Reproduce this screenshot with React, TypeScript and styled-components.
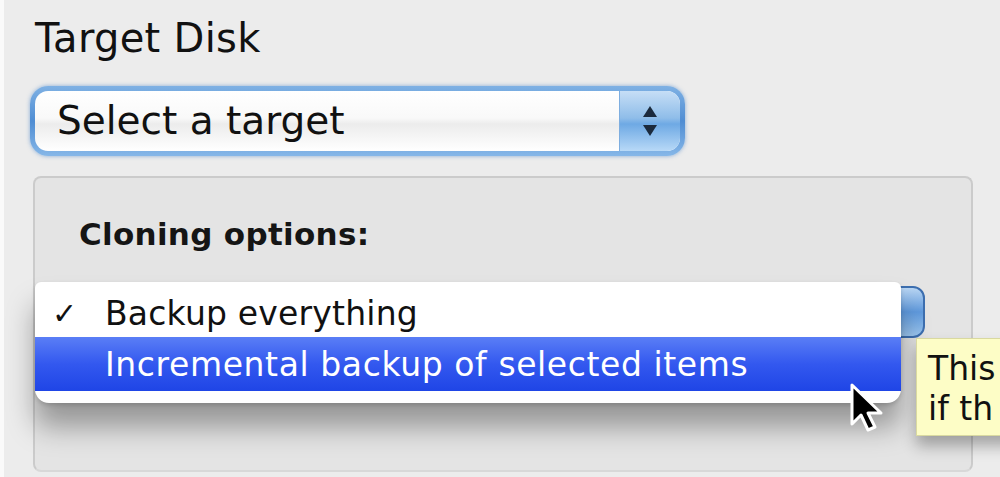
import React from 'react';
import styled, { createGlobalStyle } from 'styled-components';

const Global = createGlobalStyle`
  html, body {
    margin: 0;
    padding: 0;
    background: #ececec;
    overflow: hidden;
  }
  #root {
    width: 1000px;
    height: 477px;
  }
`

const Page = styled.div`
  position: relative;
  width: 1000px;
  height: 477px;
  box-sizing: border-box;
  padding: 12px 27px 0 30px;
  border-left: 4px solid #fafafa;
  display: flex;
  flex-direction: column;
  font-family: 'DejaVu Sans', 'Verdana', sans-serif;
  color: #111;
  overflow: hidden;
`

const Heading = styled.div`
  font-size: 40px;
  line-height: 52px;
  margin-left: 1px;
  letter-spacing: 0.3px;
`

const PopupFocus = styled.div`
  margin-top: 22px;
  width: 655px;
  height: 70px;
  box-sizing: border-box;
  padding: 5px;
  border-radius: 18px;
  background: linear-gradient(#7fb1e4, #4f8dd3 50%, #86b7e8);
  box-shadow: 0 0 4px rgba(70, 130, 200, 0.6);
  margin-left: -4px;
`

const PopupInner = styled.div`
  height: 100%;
  display: flex;
  border-radius: 13px;
  overflow: hidden;
  background: linear-gradient(#ffffff, #f9f9f9 45%, #ececec 55%, #ffffff);
`

const PopupLabel = styled.div`
  flex: 1;
  font-size: 39px;
  line-height: 60px;
  padding-left: 22px;
`

const ArrowCap = styled.div<{ $w: number }>`
  width: ${p => p.$w}px;
  display: flex;
  align-items: center;
  justify-content: center;
  background: linear-gradient(#c6def6, #8fbde9 45%, #6ea9e4 55%, #b8d9f7);
  border-left: 1px solid #7eaee0;
`

const GroupBox = styled.div`
  position: relative;
  margin-top: 20px;
  margin-left: -1px;
  height: 296px;
  box-sizing: border-box;
  border: 2px solid #cbcbcb;
  border-bottom-color: #d8d8d8;
  border-radius: 8px;
  background: #e4e4e4;
  padding: 36px 0 0 44px;
`

const GroupTitle = styled.div`
  font-size: 31px;
  font-weight: bold;
  line-height: 40px;
  letter-spacing: 0.3px;
  color: #151515;
`

const HiddenPopup = styled.div`
  margin-top: 32px;
  width: 864px;
  height: 52px;
  margin-left: -18px;
  border-radius: 12px;
  background: linear-gradient(#b9d6f3, #5f9ade 50%, #9cc6ef);
  border: 2px solid #3d6fb0;
  box-sizing: border-box;
`

const RadioDot = styled.div`
  margin-top: 12px;
  width: 24px;
  height: 10px;
  border-radius: 0 0 12px 12px;
  background: #222;
`

const Menu = styled.div`
  position: absolute;
  left: 0;
  top: 104px;
  width: 866px;
  padding: 8px 0 12px;
  background: #fff;
  border-radius: 6px 6px 14px 14px;
  box-shadow: 0 24px 28px rgba(0, 0, 0, 0.34), 0 2px 4px rgba(0, 0, 0, 0.15);
  z-index: 2;
`

const MenuItem = styled.div<{ $active?: boolean }>`
  display: flex;
  align-items: center;
  height: ${p => (p.$active ? 54 : 47)}px;
  font-size: 33px;
  letter-spacing: ${p => (p.$active ? 0.6 : 0.2)}px;
  color: ${p => (p.$active ? '#fff' : '#111')};
  background: ${p => (p.$active ? 'linear-gradient(#5a7ef6, #3358ef 50%, #1f45e6)' : 'transparent')};
`

const Check = styled.span`
  width: 70px;
  padding-left: 17px;
  box-sizing: border-box;
  font-size: 30px;
`

const Tooltip = styled.div`
  position: absolute;
  left: 912px;
  top: 338px;
  width: 110px;
  height: 98px;
  box-sizing: border-box;
  padding: 10px 0 0 11px;
  background: #fdfdc6;
  border: 1px solid #d9d9a0;
  box-shadow: 0 10px 14px rgba(0, 0, 0, 0.3);
  font-size: 33px;
  line-height: 40px;
  color: #111;
  z-index: 3;
`

const Cursor = styled.svg`
  position: absolute;
  left: 844px;
  top: 382px;
  z-index: 4;
`

function Arrows() {
  return (
    <svg width="20" height="34" viewBox="0 0 20 34">
      <path d="M10 2 L17 13 L3 13 Z" fill="#1b2a3d" />
      <path d="M10 32 L17 21 L3 21 Z" fill="#1b2a3d" />
    </svg>
  )
}

function App() {
  return (
    <>
      <Global />
      <Page>
        <Heading>Target Disk</Heading>
        <PopupFocus>
          <PopupInner>
            <PopupLabel>Select a target</PopupLabel>
            <ArrowCap $w={60}>
              <Arrows />
            </ArrowCap>
          </PopupInner>
        </PopupFocus>
        <GroupBox>
          <GroupTitle>Cloning options:</GroupTitle>
          <HiddenPopup />
          <RadioDot />
          <Menu>
            <MenuItem>
              <Check>✓</Check>
              Backup everything
            </MenuItem>
            <MenuItem $active>
              <Check />
              Incremental backup of selected items
            </MenuItem>
          </Menu>
        </GroupBox>
        <Tooltip>
          This
          <br />
          if th
        </Tooltip>
        <Cursor width="40" height="54" viewBox="0 0 40 54">
          <path
            d="M4 3 L4 42 L13 33 L20 48 L27 45 L20 31 L33 31 Z"
            fill="#000"
            stroke="#fff"
            strokeWidth="3"
            strokeLinejoin="round"
          />
        </Cursor>
      </Page>
    </>
  );
}

export default App;
